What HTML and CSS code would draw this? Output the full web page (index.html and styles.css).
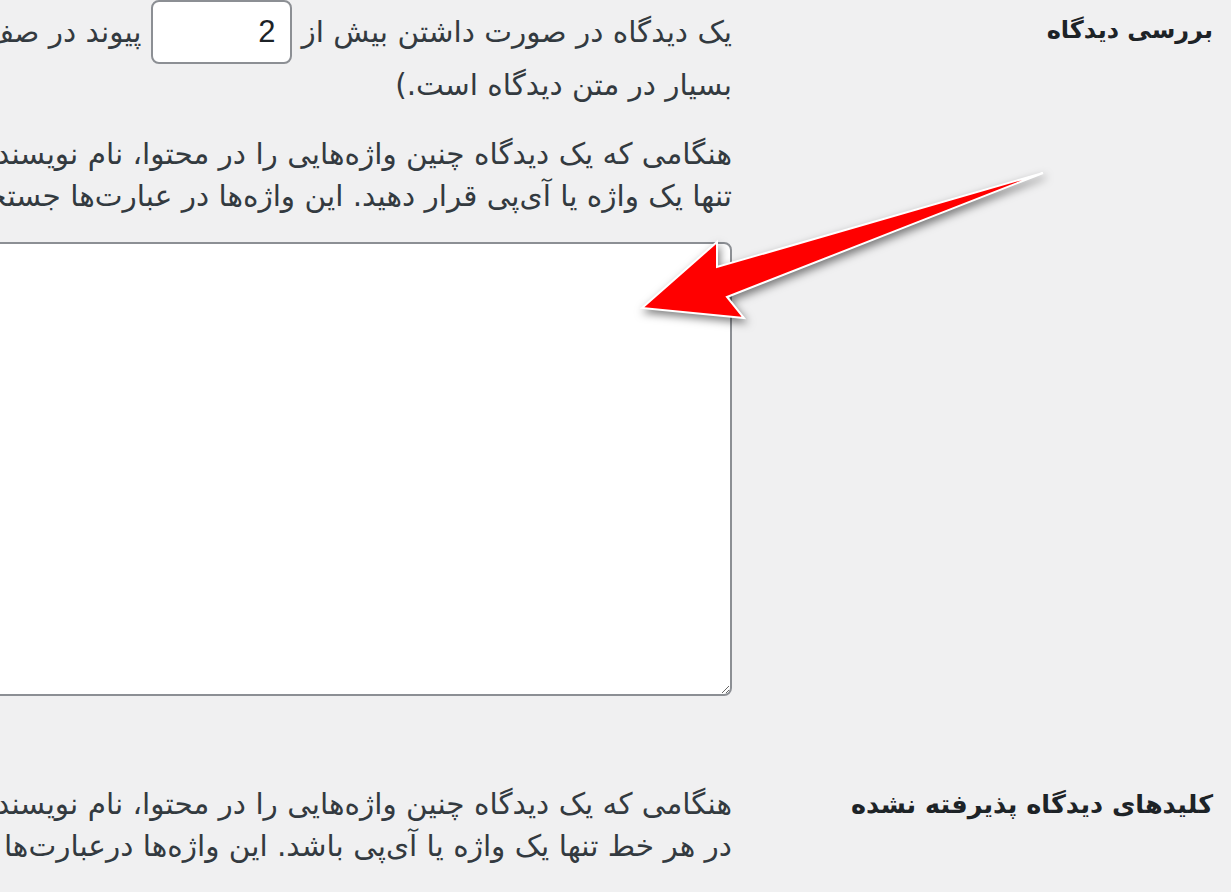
FILE: index.html
```html
<!DOCTYPE html>
<html lang="fa" dir="rtl">
<head>
<meta charset="utf-8">
<title>تنظیمات دیدگاه</title>
<link rel="stylesheet" href="styles.css">
</head>
<body>
<div class="page">
  <div class="row row-moderation">
    <div class="label">بررسی دیدگاه</div>
    <div class="field">
      <p class="line first">یک دیدگاه در صورت داشتن بیش از <input class="small-text" type="text" value="2"> پیوند در صف بررسی نگه داشته شود. (یکی از ویژگی‌های رایج هرزنامه‌ها تعداد پیوندهای</p>
      <p class="line">بسیار در متن دیدگاه است.)</p>
      <div class="desc">
        <p class="line">هنگامی که یک دیدگاه چنین واژه‌هایی را در محتوا، نام نویسنده، نشانی اینترنتی، ایمیل، آی‌پی یا مرورگر داشته باشد، در صف بررسی نگه داشته خواهد شد. در هر خط</p>
        <p class="line">تنها یک واژه یا آی‌پی قرار دهید. این واژه‌ها در عبارت‌ها جستجو خواهند شد، پس «press» با «WordPress» نیز هم‌خوان خواهد بود.</p>
      </div>
      <textarea class="keys" rows="10"></textarea>
    </div>
  </div>
  <div class="row row-disallowed">
    <div class="label">کلیدهای دیدگاه پذیرفته نشده</div>
    <div class="field">
      <p class="line">هنگامی که یک دیدگاه چنین واژه‌هایی را در محتوا، نام نویسنده، نشانی اینترنتی، ایمیل، آی‌پی یا مرورگر داشته باشد، به زباله‌دان فرستاده خواهد شد. باید</p>
      <p class="line">در هر خط تنها یک واژه یا آی‌پی باشد. این واژه‌ها درعبارت‌ها جستجو خواهند شد، پس «press» با «WordPress» نیز هم‌خوان خواهد بود.</p>
    </div>
  </div>
</div>
<svg class="arrow" width="1231" height="892" viewBox="0 0 1231 892" aria-hidden="true">
  <polygon points="1043,173 717,267 717,242 642,308 744,318 727,297" fill="#ff0000" stroke="#ffffff" stroke-width="2" stroke-linejoin="miter"/>
</svg>
</body>
</html>
```
FILE: styles.css
```css
html, body {
  margin: 0;
  padding: 0;
  background: #f0f0f1;
  overflow: hidden;
  width: 1231px;
  height: 892px;
}
body {
  font-family: "DejaVu Sans", "Noto Sans", sans-serif;
  color: #333a40;
  font-size: 29.5px;
  position: relative;
}
.page {
  display: flex;
  flex-direction: column;
}
.row {
  display: flex;
  flex-direction: row;
}
.label {
  flex: 0 0 481px;
  padding-right: 18px;
  font-weight: bold;
  color: #1d2327;
  font-size: 24px;
  line-height: 42px;
  white-space: nowrap;
  padding-top: 9px;
}
.row-disallowed .label {
  font-size: 25.5px;
  padding-top: 0;
}
.field {
  flex: 1 1 auto;
  min-width: 0;
  display: flex;
  flex-direction: column;
  align-items: flex-start;
}
.line {
  margin: 0;
  line-height: 42px;
  white-space: nowrap;
}
.line.first {
  height: 64px;
  display: flex;
  align-items: center;
}
.small-text {
  width: 141px;
  height: 64px;
  box-sizing: border-box;
  border: 2px solid #8c8f94;
  border-radius: 8px;
  background: #fff;
  font-family: "Liberation Sans", Arial, sans-serif;
  font-size: 31px;
  color: #1d2327;
  text-align: right;
  padding: 0 14px;
  margin: 0 10px 0 9px;
  direction: ltr;
}
.desc {
  margin-top: 27px;
}
.keys {
  margin-top: 25px;
  width: 1000px;
  min-width: 1000px;
  height: 454px;
  box-sizing: border-box;
  border: 2px solid #8c8f94;
  border-radius: 8px;
  background: #fff;
  display: block;
  direction: ltr;
  resize: both;
}
.row-disallowed {
  margin-top: 87px;
}
.arrow {
  position: absolute;
  left: 0;
  top: 0;
  pointer-events: none;
  filter: drop-shadow(2px 4px 4px rgba(0, 0, 0, 0.5));
}
```
